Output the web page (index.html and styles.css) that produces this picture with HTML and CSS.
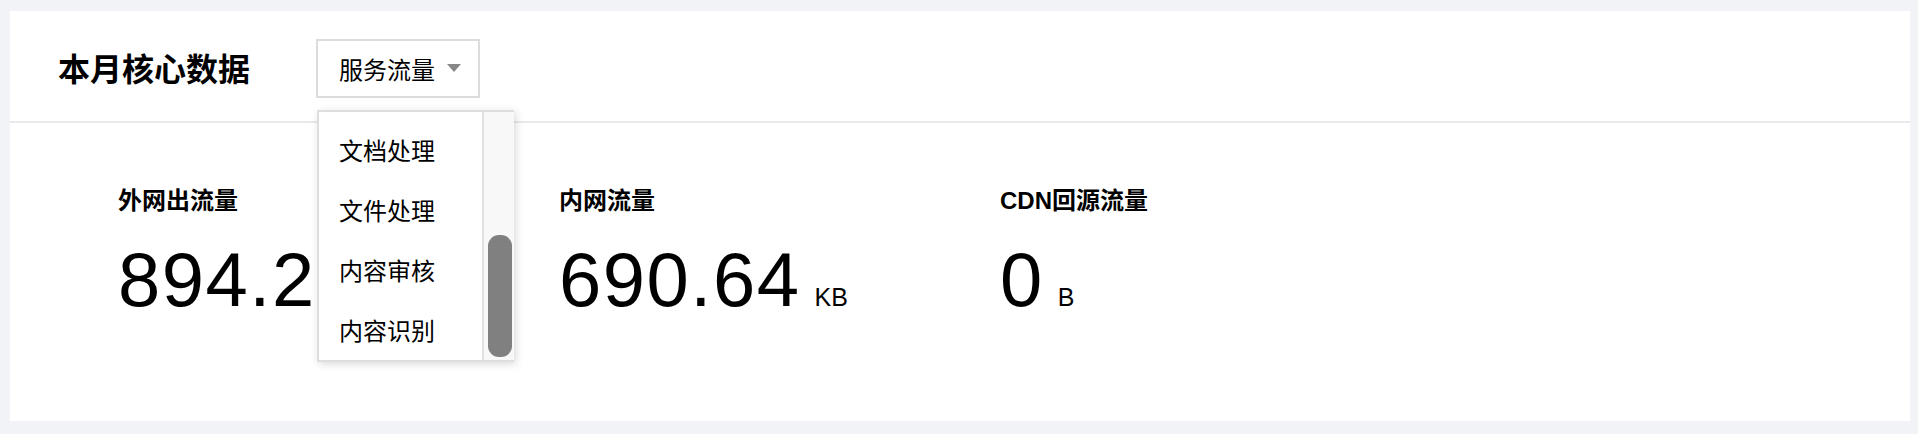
FILE: index.html
```html
<!DOCTYPE html>
<html>
<head>
  <meta charset="utf-8">
  <title>本月核心数据</title>
  <link rel="stylesheet" href="styles.css">
</head>
<body>
<div class="card">
  <div class="card-head">
    <h2 class="title">本月核心数据</h2>
    <div class="select">
      <span class="select-value">服务流量</span>
      <span class="select-arrow"></span>
      <div class="dropdown">
        <ul class="options">
          <li>文档处理</li>
          <li>文件处理</li>
          <li>内容审核</li>
          <li>内容识别</li>
        </ul>
        <div class="scrollbar">
          <div class="thumb"></div>
        </div>
      </div>
    </div>
  </div>
  <div class="stats">
    <div class="stat">
      <div class="stat-label">外网出流量</div>
      <div class="stat-value">894.27<span class="unit">KB</span></div>
    </div>
    <div class="stat">
      <div class="stat-label">内网流量</div>
      <div class="stat-value">690.64<span class="unit">KB</span></div>
    </div>
    <div class="stat">
      <div class="stat-label">CDN回源流量</div>
      <div class="stat-value">0<span class="unit">B</span></div>
    </div>
  </div>
</div>
</body>
</html>
```

FILE: styles.css
```css
* {
  box-sizing: border-box;
}
body {
  margin: 0;
  padding: 11px 8px 13px 10px;
  background-color: #f2f3f7;
  font-family: "Liberation Sans", "Noto Sans CJK SC", sans-serif;
  color: #000;
}
.card {
  background-color: #fff;
  height: 410px;
}
.card-head {
  height: 112px;
  display: flex;
  align-items: center;
  padding-left: 48px;
  padding-top: 4px;
  border-bottom: 2px solid #e8e9ed;
}
.title {
  margin: 4px 66px 0 0;
  font-size: 32px;
  font-weight: bold;
  line-height: 40px;
}
.select {
  position: relative;
  width: 164px;
  height: 59px;
  border: 2px solid #dcdcdc;
  display: flex;
  align-items: center;
  padding-left: 21px;
  font-size: 24px;
}
.select-arrow {
  width: 0;
  height: 0;
  margin-left: 12px;
  border-left: 7px solid transparent;
  border-right: 7px solid transparent;
  border-top: 8px solid #888;
}

/* dropdown */
.dropdown {
  position: absolute;
  top: 69px;
  left: -1px;
  width: 197px;
  height: 252px;
  display: flex;
  background-color: #fff;
  border: 2px solid #dedede;
  border-right: none;
  box-shadow: 2px 2px 8px rgba(0, 0, 0, 0.15);
  z-index: 2;
}
.options {
  list-style-type: none;
  margin: 0;
  padding: 10px 0 0 0;
  width: 165px;
  border-right: 2px solid #e0e0e0;
  overflow: hidden;
}
.options li {
  height: 60px;
  line-height: 60px;
  padding-left: 20px;
  font-size: 24px;
}
.scrollbar {
  flex: 1;
  display: flex;
  flex-direction: column;
  background-color: #f8f8f8;
  padding: 0 2px 3px 4px;
}
.thumb {
  margin-top: auto;
  height: 122px;
  border-radius: 11px;
  background-color: #808080;
}

/* stats */
.stats {
  display: flex;
  padding: 61px 0 0 108px;
}
.stat {
  width: 441px;
}
.stat-label {
  font-size: 24px;
  font-weight: bold;
  line-height: 34px;
}
.stat-value {
  margin-top: 24px;
  font-size: 76px;
  line-height: 76px;
  letter-spacing: 1.5px;
  white-space: nowrap;
}
.unit {
  margin-left: 14px;
  font-size: 25px;
  letter-spacing: 0;
}
```
